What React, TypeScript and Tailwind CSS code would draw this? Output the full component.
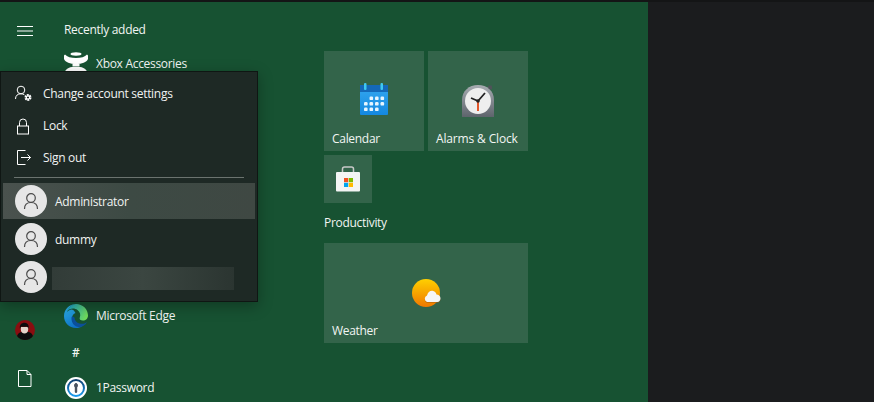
import React from 'react';

const font = 'font-["Open_Sans","Noto_Sans",sans-serif] tracking-[-0.3px]';

const Hamburger = () => <svg width="16" height="12" viewBox="0 0 16 12" fill="none" stroke="#fff" strokeWidth="1">
    <path d="M0 .5h16M0 5h16M0 9.500h16" />
  </svg>;

const DocIcon = () => <svg width="14" height="17" viewBox="0 0 14 17" fill="none" stroke="#fff" strokeWidth="1">
    <path d="M.5.5h8.500l4 4v12H.5zM9 .5v4h4" />
  </svg>;

const RedAvatar = () => <svg width="20" height="20" viewBox="0 0 20 20">
    <circle cx="10" cy="10" r="10" fill="#8a0d10" />
    <path d="M2 16c1.500-3.500 4-4.500 8-4.500s6.500 1 8 4.500a10 10 0 0 1-16 0z" fill="#0c0c0c" />
    <path d="M5.800 7h7.400v2.500c0 2.500-1.700 4-3.700 4s-3.700-1.500-3.700-4z" fill="#e3d3c8" />
    <path d="M5 9c-1-4.500 2-6.500 4.800-6.300 2.700.2 4.500 2.300 3.700 6.300-.4-1.300-1.200-2.300-2.200-2.500-1.800.4-3.500.3-4.800.1C5.700 7 5.300 8 5 9z" fill="#0c0c0c" />
  </svg>;

const XboxIcon = () => <svg width="24" height="24" viewBox="0 0 24 24" fill="#fff">
    <ellipse cx="12" cy="2" rx="5.500" ry="1.700" />
    <path d="M1 2.500C3 5 7 6 12 6s9-1 11-3.500l1 1V7c-1.500 3.500-6 5-12 5S1.500 10.500 0 7V3.500z" />
    <rect x="8.500" y="12" width="7" height="2.500" />
    <path d="M0 24c0-5 3-8.500 8-9h8c5 .5 8 4 8 9z" />
  </svg>;

const EdgeIcon = () => <svg width="24" height="24" viewBox="0 0 24 24">
    <defs>
      <linearGradient id="edgeA" x1="0.2" y1="0" x2="0.5" y2="1">
        <stop offset="0" stopColor="#2fb7ea" />
        <stop offset="1" stopColor="#0e6fc4" />
      </linearGradient>
      <linearGradient id="edgeB" x1="0" y1="0.3" x2="1" y2="0.6">
        <stop offset="0" stopColor="#1aa8cf" />
        <stop offset="1" stopColor="#72dd58" />
      </linearGradient>
    </defs>
    <path d="M12 0C5.400 0 0 5.400 0 12c0 6.600 5 12 12 12 2.500 0 4.500-.6 6.500-1.800-4 .8-10-1.500-10.500-7.500-.2-3 1.500-5 3.500-5.700C9 4 6 5 3 8 5 3.500 8.500 0 12 0z" fill="url(#edgeA)" />
    <path d="M7.500 13.500C7 18.500 10.500 23 15 23c3 0 6.500-1.700 8-5-2 1.800-5 2.200-7.500 1.500-3-.8-5-3-5-6-1.500-1.500-3-1.500-3 0z" fill="#0b4f9a" />
    <path d="M3 7.500C5 3 8.500 0 12 0c6.600 0 12 5 12 11.500 0 3-2.300 5-5 5-2.500 0-4-1.300-3.200-3 1-2.500.5-5.500-2.300-7.500C10.500 3.700 5.500 4 3 7.500z" fill="url(#edgeB)" />
  </svg>;

const OnePassword = () => <svg width="22" height="22" viewBox="0 0 22 22">
    <defs>
      <linearGradient id="opRing" x1="0" y1="0" x2="0" y2="1">
        <stop offset="0" stopColor="#0f3f70" />
        <stop offset="1" stopColor="#1a9cf0" />
      </linearGradient>
    </defs>
    <circle cx="11" cy="11" r="11" fill="#fff" />
    <circle cx="11" cy="11" r="8" fill="none" stroke="url(#opRing)" strokeWidth="2" />
    <rect x="9.800" y="6" width="2.400" height="10" rx="1.200" fill="#4a5360" />
    <circle cx="11" cy="8.500" r="2" fill="#4a5360" />
  </svg>;

const AccountGear = () => <svg width="18" height="18" viewBox="0 0 18 18" fill="none" stroke="#fff" strokeWidth="1">
    <circle cx="6" cy="5" r="3.800" />
    <path d="M.5 14c0-3.500 2.200-5.200 5.500-5.200 1.500 0 2.500.4 3.400 1" />
    <circle cx="13" cy="12.500" r="2.400" strokeWidth="2.200" strokeDasharray="1.600 .7" />
    <circle cx="13" cy="12.500" r="1.700" strokeWidth="1.200" />
  </svg>;

const LockIcon = () => <svg width="14" height="17" viewBox="0 0 14 17" fill="none" stroke="#fff" strokeWidth="1">
    <rect x="1.500" y="8" width="11" height="8" />
    <path d="M3.500 8V4.500a3.500 3.500 0 0 1 7 0V8" />
  </svg>;

const SignOutIcon = () => <svg className="-mt-[2px]" width="16" height="15" viewBox="0 0 16 15" fill="none" stroke="#fff" strokeWidth="1">
    <path d="M9.500.5H1.500v14h8M5 7.500h9.500M11.500 4.500l3 3-3 3" />
  </svg>;

const PersonAvatar = () => <div className="w-8 h-8 shrink-0 rounded-full bg-[#e6e6e6] flex items-center justify-center">
    <svg width="16" height="16" viewBox="0 0 16 16" fill="none" stroke="#4a4a4a" strokeWidth="1.200">
      <circle cx="8" cy="5" r="4.300" />
      <path d="M1.500 16c0-4 2.500-6.500 6.500-6.500s6.500 2.500 6.500 6.500" />
    </svg>
  </div>;

const CalendarIcon = () => <svg width="30" height="32" viewBox="0 0 30 32">
    <defs>
      <linearGradient id="cal" x1="0" y1="0" x2="0" y2="1">
        <stop offset="0" stopColor="#35a8f0" />
        <stop offset="1" stopColor="#1388e0" />
      </linearGradient>
    </defs>
    <rect x="1" y="2" width="28" height="30" rx="1" fill="url(#cal)" />
    <rect x="1" y="2" width="28" height="7" fill="#1468b8" />
    <rect x="5" y="0" width="2.500" height="7" rx="1" fill="#3fc8f0" />
    <rect x="21.500" y="0" width="2.500" height="7" rx="1" fill="#3fc8f0" />
    {[[10.500, 13.500], [16, 13.500], [21.500, 13.500], [5, 19], [10.500, 19], [16, 19], [21.500, 19], [5, 24.500], [10.500, 24.500], [16, 24.500]].map(([x, y], i) => <rect key={i} x={x} y={y} width="3.600" height="3.600" rx="1.200" fill="#e6f5ff" />)}
  </svg>;

const ClockIcon = () => <svg width="34" height="34" viewBox="0 0 34 34">
    <defs>
      <linearGradient id="clockBody" x1="0" y1="0" x2="0" y2="1">
        <stop offset="0" stopColor="#a8acb2" />
        <stop offset="1" stopColor="#5e646c" />
      </linearGradient>
    </defs>
    <rect x="27" y="1.500" width="4" height="4" rx="1" fill="#4f5359" />
    <path d="M1 33V16C1 7 8 1 17 1s16 6 16 15v17z" fill="url(#clockBody)" />
    <circle cx="17" cy="17" r="13" fill="#eeeeee" />
    <path d="M17 17l-7-3M17 17l7-8" stroke="#222" strokeWidth="1.800" fill="none" />
    <path d="M17 17v10" stroke="#e2572b" strokeWidth="2" />
    <circle cx="17" cy="17" r="1.800" fill="#222" />
  </svg>;

const StoreIcon = () => <svg width="24" height="26" viewBox="0 0 24 26">
    <path d="M6.500 7V3a2 2 0 0 1 2-2h7a2 2 0 0 1 2 2v4" fill="none" stroke="#c9c9c9" strokeWidth="1.500" />
    <rect x="0" y="6" width="24" height="19.500" rx="1" fill="#f4f4f4" />
    <rect x="8" y="12" width="4.200" height="4.200" fill="#f25022" />
    <rect x="12.800" y="12" width="4.200" height="4.200" fill="#7fba00" />
    <rect x="8" y="16.800" width="4.200" height="4.200" fill="#00a4ef" />
    <rect x="12.800" y="16.800" width="4.200" height="4.200" fill="#ffb900" />
  </svg>;

const WeatherIcon = () => <svg className="ml-[3px]" width="31" height="29" viewBox="0 0 31 29">
    <defs>
      <linearGradient id="sun" x1="0" y1="0" x2="0" y2="1">
        <stop offset="0" stopColor="#ffd000" />
        <stop offset="1" stopColor="#f07800" />
      </linearGradient>
    </defs>
    <circle cx="14" cy="14" r="14" fill="url(#sun)" />
    <path d="M15 24a3.500 3.500 0 0 1 0-6.500c.8-3 3-5 5.500-4.700 2 .3 3.500 1.700 4 3.700 2 0 4 1.700 4 3.700 0 2-1.500 3.800-3 3.800z" fill="#a05a10" opacity=".5" />
    <path d="M15 23a3.500 3.500 0 0 1 0-6.500c.8-3 3-5 5.500-4.700 2 .3 3.500 1.700 4 3.700 2 0 4 1.700 4 3.700 0 2-1.500 3.800-3 3.800z" fill="#f6f6f6" />
  </svg>;

const Tile = ({ label, labelClass, icon, className }: { label?: string; labelClass?: string; icon: React.ReactNode; className: string }) => <div className={`relative bg-[#33644a] flex items-center justify-center ${className}`}>
    {icon}
    {label && <span className={`absolute left-2 bottom-[4px] text-xs text-[#f2f5f3] ${labelClass || ''}`}>{label}</span>}
  </div>;

const MenuAction = ({ icon, label }: { icon: React.ReactNode; label: string }) => <div className="h-8 flex items-center">
    <div className="w-[42px] pl-[14px] shrink-0 flex items-center">{icon}</div>
    <span className="text-xs text-[#f0f2f1]">{label}</span>
  </div>;

const Flyout = () => <div className="absolute left-0 top-[69px] w-[258px] h-[231px] bg-[#1e2925] border border-[#0f1613] shadow-[0_4px_14px_rgba(0,0,0,0.3)] pt-[6px]">
    <MenuAction icon={<AccountGear />} label="Change account settings" />
    <MenuAction icon={<div className="pl-[1px]"><LockIcon /></div>} label="Lock" />
    <MenuAction icon={<div className="pl-[1px]"><SignOutIcon /></div>} label="Sign out" />
    <div className="mt-[3px] mx-[13px] h-px bg-[#6b736f]" />
    <div className="mt-[5px] mx-[2px] h-9 flex items-center pl-3 gap-2 bg-gradient-to-r from-[#4a524e] via-[#3d4a44] to-[#3f4843]">
      <PersonAvatar />
      <span className="text-xs text-[#f0f2f1] pt-[1px]">Administrator</span>
    </div>
    <div className="mx-[2px] mt-[2px] h-9 flex items-center pl-3 gap-2">
      <PersonAvatar />
      <span className="text-xs text-[#f0f2f1] pt-[1px]">dummy</span>
    </div>
    <div className="mx-[2px] mt-[2px] h-9 flex items-center pl-3 gap-[5px]">
      <PersonAvatar />
      <div className="mt-[2px] w-[182px] h-[23px] bg-gradient-to-r from-[#323c38] via-[#3b4641] to-[#2b3531]" />
    </div>
  </div>;

export default function App() {
  return <div className={`w-[874px] h-[402px] overflow-hidden bg-[#1b1c1e] ${font}`}>
      <div className="h-[2px] bg-[#141516]" />
      <div className="relative w-[648px] h-[400px] bg-[#175232] flex">
        {/* left rail */}
        <div className="w-[50px] shrink-0 flex flex-col items-center pt-[24px]">
          <Hamburger />
          <div className="mt-[282px]"><RedAvatar /></div>
          <div className="mt-[30px]"><DocIcon /></div>
        </div>

        {/* app list */}
        <div className="w-[274px] shrink-0 pl-[14px] text-xs text-[#f2f5f3]">
          <div className="h-4 mt-5 flex items-center">Recently added</div>
          <div className="mt-[8px] h-9 flex items-center gap-2">
            <XboxIcon />
            <span>Xbox Accessories</span>
          </div>
          <div className="mt-[216px] h-9 flex items-center gap-2">
            <EdgeIcon />
            <span>Microsoft Edge</span>
          </div>
          <div className="h-[38px] pl-[8px] flex items-center font-semibold">#</div>
          <div className="h-8 flex items-center gap-[9px] pl-[1px]">
            <OnePassword />
            <span>1Password</span>
          </div>
        </div>

        {/* tiles */}
        <div className="flex flex-col pt-[49px]">
          <div className="flex gap-1">
            <Tile className="w-[100px] h-[100px] pb-1" label="Calendar" icon={<CalendarIcon />} />
            <Tile className="w-[100px] h-[100px]" label="Alarms & Clock" labelClass="tracking-[-0.15px]" icon={<ClockIcon />} />
          </div>
          <Tile className="mt-1 w-12 h-12" icon={<StoreIcon />} />
          <div className="h-10 flex items-center text-xs text-[#f2f5f3]">Productivity</div>
          <Tile className="w-[204px] h-[100px]" label="Weather" icon={<WeatherIcon />} />
        </div>

        <Flyout />
      </div>
    </div>;
}
